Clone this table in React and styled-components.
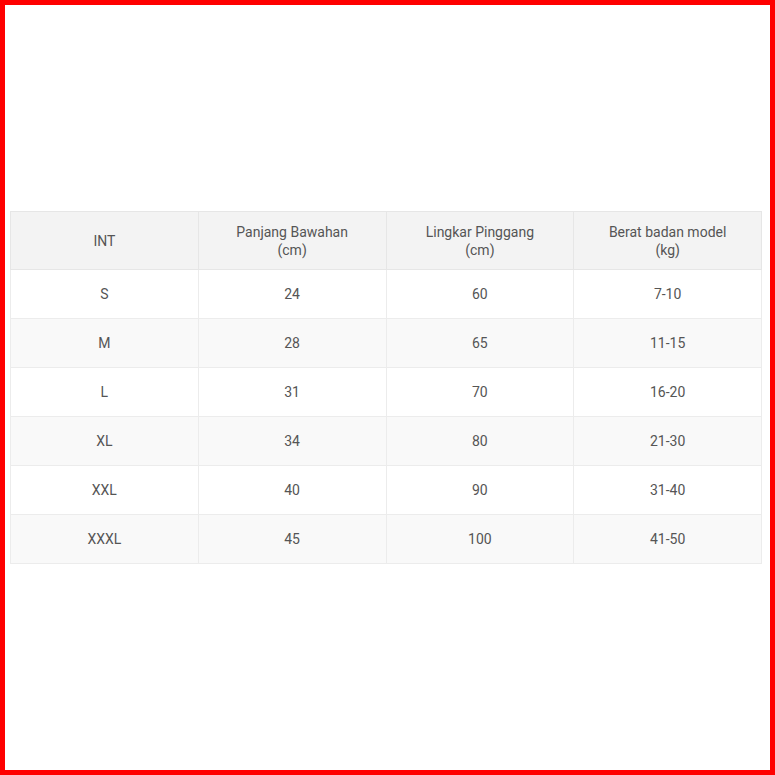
import React from "react";
import styled, { createGlobalStyle } from "styled-components";

const GlobalStyle = createGlobalStyle`
  html, body {
    margin: 0;
    padding: 0;
    background: #ffffff;
  }
  body {
    font-family: Roboto, "Liberation Sans", Arial, sans-serif;
  }
`;

const Frame = styled.div`
  box-sizing: border-box;
  width: 775px;
  height: 775px;
  border: 5px solid #ff0000;
  display: flex;
  align-items: center;
  padding: 0 8px 0 5px;
`;

const Table = styled.table`
  width: 752px;
  border-collapse: collapse;
  table-layout: fixed;
  color: #555555;
  font-size: 14px;
  text-align: center;
`;

const HeadCell = styled.th`
  height: 57px;
  padding: 0 10px;
  background: #f3f3f3;
  border: 1px solid #e6e6e6;
  font-weight: 400;
  line-height: 18px;
`;

const Row = styled.tr`
  background: ${(p) => (p.$striped ? "#f9f9f9" : "#ffffff")};
`;

const Cell = styled.td`
  height: 48px;
  padding: 0 10px;
  border: 1px solid #ececec;
  line-height: 18px;
`;

const headers = [
  ["INT"],
  ["Panjang Bawahan", "(cm)"],
  ["Lingkar Pinggang", "(cm)"],
  ["Berat badan model", "(kg)"],
];

const rows = [
  ["S", "24", "60", "7-10"],
  ["M", "28", "65", "11-15"],
  ["L", "31", "70", "16-20"],
  ["XL", "34", "80", "21-30"],
  ["XXL", "40", "90", "31-40"],
  ["XXXL", "45", "100", "41-50"],
];

export default function App() {
  return (
    <>
      <GlobalStyle />
      <Frame>
        <Table>
          <thead>
            <tr>
              {headers.map((lines, i) => (
                <HeadCell key={i}>
                  {lines.map((l, j) => (
                    <div key={j}>{l}</div>
                  ))}
                </HeadCell>
              ))}
            </tr>
          </thead>
          <tbody>
            {rows.map((r, i) => (
              <Row key={r[0]} $striped={i % 2 === 1}>
                {r.map((v, j) => (
                  <Cell key={j}>{v}</Cell>
                ))}
              </Row>
            ))}
          </tbody>
        </Table>
      </Frame>
    </>
  );
}
